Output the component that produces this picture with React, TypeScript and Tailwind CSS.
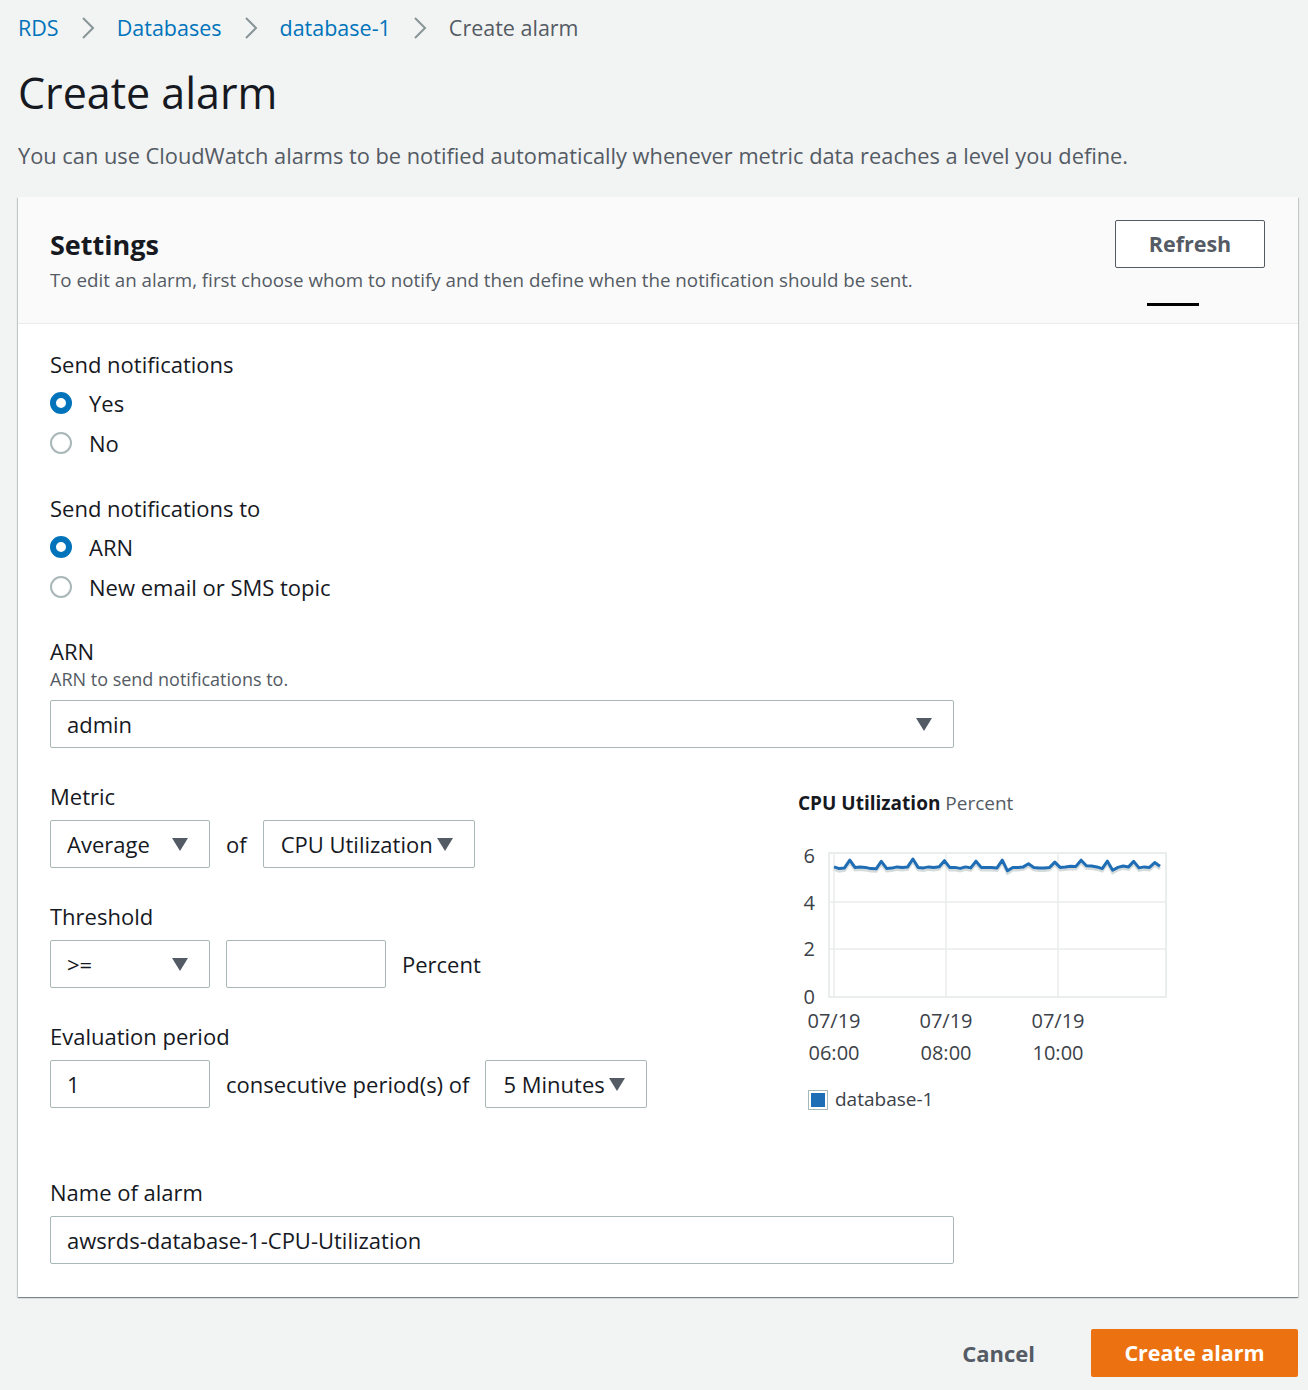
const vals = [
  5.42, 5.35, 5.38, 5.7, 5.4, 5.42, 5.4, 5.35, 5.34, 5.65, 5.36, 5.37, 5.42, 5.4, 5.42, 5.75, 5.4, 5.38, 5.42,
  5.4, 5.43, 5.68, 5.4, 5.4, 5.36, 5.42, 5.38, 5.66, 5.4, 5.4, 5.4, 5.38, 5.7, 5.26, 5.4, 5.4, 5.42, 5.55, 5.4,
  5.37, 5.38, 5.4, 5.62, 5.4, 5.42, 5.45, 5.44, 5.7, 5.47, 5.46, 5.42, 5.35, 5.66, 5.28, 5.4, 5.46, 5.42, 5.65,
  5.38, 5.42, 5.4, 5.6, 5.45,
];

function Chevron() {
  return (
    <svg width="14" height="24" viewBox="0 0 14 24" className="mx-[22px]">
      <path d="M2 2 L12 12 L2 22" fill="none" stroke="#879596" strokeWidth="2" />
    </svg>
  );
}

function Caret() {
  return (
    <svg width="16" height="13" viewBox="0 0 16 13" className="shrink-0">
      <path d="M0 0 H16 L8 13 Z" fill="#545b64" />
    </svg>
  );
}

function Radio({ checked, label }: { checked?: boolean; label: string }) {
  return (
    <div className="flex items-center h-10">
      <span
        className={
          checked
            ? "w-[22px] h-[22px] rounded-full border-[6px] border-[#0073bb] bg-white"
            : "w-[22px] h-[22px] rounded-full border-2 border-[#aab7b8] bg-white"
        }
      />
      <span className="ml-[17px] text-[#16191f]">{label}</span>
    </div>
  );
}

function Chart() {
  const x0 = 36;
  const x1 = 362;
  const step = (x1 - x0) / (vals.length - 1);
  const pts = vals.map((v, i) => `${(x0 + i * step).toFixed(1)},${(157 - v * 24).toFixed(1)}`).join(" ");
  const shadow = vals.map((v, i) => `${(x0 + i * step).toFixed(1)},${(159.5 - v * 24).toFixed(1)}`).join(" ");
  return (
    <svg width="380" height="280" viewBox="0 0 380 280" className="block">
      <rect x="31" y="13" width="337" height="144" fill="#fff" stroke="#eaeded" strokeWidth="2" />
      <line x1="31" y1="62" x2="368" y2="62" stroke="#eaeded" strokeWidth="1.5" />
      <line x1="31" y1="109" x2="368" y2="109" stroke="#eaeded" strokeWidth="1.5" />
      <line x1="36" y1="13" x2="36" y2="157" stroke="#eaeded" strokeWidth="1.5" />
      <line x1="148" y1="13" x2="148" y2="157" stroke="#eaeded" strokeWidth="1.5" />
      <line x1="260" y1="13" x2="260" y2="157" stroke="#eaeded" strokeWidth="1.5" />
      <polyline points={shadow} fill="none" stroke="#d5dbdb" strokeWidth="3" />
      <polyline points={pts} fill="none" stroke="#1f6eb5" strokeWidth="3" strokeLinejoin="round" />
      <g fill="#3b4148" fontSize="20" fontFamily="'Open Sans', sans-serif" textAnchor="end">
        <text x="17" y="23">6</text>
        <text x="17" y="70">4</text>
        <text x="17" y="116">2</text>
        <text x="17" y="164">0</text>
      </g>
      <g fill="#3b4148" fontSize="20" fontFamily="'Open Sans', sans-serif" textAnchor="middle">
        <text x="36" y="188">07/19</text>
        <text x="148" y="188">07/19</text>
        <text x="260" y="188">07/19</text>
        <text x="36" y="220">06:00</text>
        <text x="148" y="220">08:00</text>
        <text x="260" y="220">10:00</text>
      </g>
      <rect x="10.5" y="250.5" width="19" height="19" fill="#fff" stroke="#aab7b8" />
      <rect x="13" y="253" width="14" height="14" fill="#1f6eb5" />
      <text x="37" y="266" fill="#3b4148" fontSize="19" fontFamily="'Open Sans', sans-serif">
        database-1
      </text>
    </svg>
  );
}

export default function App() {
  return (
    <div className="min-h-screen bg-[#f2f3f3] pl-[18px] pr-[10px] pt-[13px] pb-[13px] font-['Open_Sans',sans-serif] text-[22px] leading-[30px] text-[#16191f]">
      <nav className="flex items-center text-[21.5px] leading-[30px]">
        <span className="text-[#0073bb]">RDS</span>
        <Chevron />
        <span className="text-[#0073bb]">Databases</span>
        <Chevron />
        <span className="text-[#0073bb]">database-1</span>
        <Chevron />
        <span className="text-[#545b64]">Create alarm</span>
      </nav>

      <h1 className="mt-[24px] text-[43px] leading-[52px] font-normal">Create alarm</h1>
      <p className="mt-[22px] text-[21.8px] leading-[30px] text-[#545b64]">
        You can use CloudWatch alarms to be notified automatically whenever metric data reaches a level you define.
      </p>

      <div className="mt-[26px] bg-white shadow-[0_1px_1px_0_rgba(0,28,36,0.3),1px_1px_1px_0_rgba(0,28,36,0.15),-1px_1px_1px_0_rgba(0,28,36,0.15)]">
        <div className="h-[127px] bg-[#fafafa] border-b border-[#eaeded] flex justify-between pl-[32px] pr-[33px] pt-[23px]">
          <div className="mt-[7px]">
            <h2 className="text-[27px] leading-[36px] font-bold">Settings</h2>
            <p className="mt-[5px] text-[18.75px] leading-[24px] text-[#545b64]">
              To edit an alarm, first choose whom to notify and then define when the notification should be sent.
            </p>
          </div>
          <div>
            <button className="w-[150px] h-12 bg-white border border-[#545b64] rounded-[2px] text-[21.5px] font-bold text-[#545b64]">
              Refresh
            </button>
            <div className="mt-[35px] ml-[32px] w-[52px] h-[3px] bg-black" />
          </div>
        </div>

        <div className="pl-[32px] pr-[32px] pt-[25px] pb-[33px]">
          <div>Send notifications</div>
          <div className="mt-[4px]">
            <Radio checked label="Yes" />
            <Radio label="No" />
          </div>

          <div className="mt-[30px]">Send notifications to</div>
          <div className="mt-[4px]">
            <Radio checked label="ARN" />
            <Radio label="New email or SMS topic" />
          </div>

          <div className="mt-[29px]">ARN</div>
          <div className="text-[18px] leading-[26px] text-[#545b64]">ARN to send notifications to.</div>
          <div className="mt-[8px] w-[904px] h-12 border border-[#aab7b8] rounded-[2px] flex items-center justify-between pl-[16px] pr-[21px]">
            <span>admin</span>
            <Caret />
          </div>

          <div className="flex items-start">
            <div className="w-[748px]">
              <div className="mt-[33px]">Metric</div>
              <div className="mt-[9px] flex items-center">
                <div className="w-[160px] h-12 border border-[#aab7b8] rounded-[2px] flex items-center justify-between pl-[16px] pr-[21px]">
                  <span>Average</span>
                  <Caret />
                </div>
                <span className="mx-[16px]">of</span>
                <div className="h-12 border border-[#aab7b8] rounded-[2px] flex items-center gap-[4px] pl-[17px] pr-[21px]">
                  <span>CPU Utilization</span>
                  <Caret />
                </div>
              </div>

              <div className="mt-[33px]">Threshold</div>
              <div className="mt-[9px] flex items-center">
                <div className="w-[160px] h-12 border border-[#aab7b8] rounded-[2px] flex items-center justify-between pl-[16px] pr-[21px]">
                  <span>&gt;=</span>
                  <Caret />
                </div>
                <div className="ml-[16px] w-[160px] h-12 border border-[#aab7b8] rounded-[2px]" />
                <span className="ml-[16px]">Percent</span>
              </div>

              <div className="mt-[33px]">Evaluation period</div>
              <div className="mt-[9px] flex items-center">
                <div className="w-[160px] h-12 border border-[#aab7b8] rounded-[2px] flex items-center pl-[16px]">
                  <span>1</span>
                </div>
                <span className="mx-[16px]">consecutive period(s) of</span>
                <div className="h-12 border border-[#aab7b8] rounded-[2px] flex items-center gap-[4px] pl-[17px] pr-[21px]">
                  <span>5 Minutes</span>
                  <Caret />
                </div>
              </div>
            </div>

            <div className="h-[360px] pt-[42px]">
              <div className="text-[19px] leading-[26px] text-[#545b64]">
                <span className="font-bold text-[#16191f]">CPU Utilization</span> Percent
              </div>
              <div className="mt-[24px]">
                <Chart />
              </div>
            </div>
          </div>

          <div className="mt-[69px]">Name of alarm</div>
          <div className="mt-[9px] w-[904px] h-12 border border-[#aab7b8] rounded-[2px] flex items-center pl-[16px]">
            <span>awsrds-database-1-CPU-Utilization</span>
          </div>
        </div>
      </div>

      <div className="mt-[32px] flex justify-end items-center">
        <button className="mr-[56px] text-[22px] font-bold text-[#545b64]">Cancel</button>
        <button className="w-[207px] h-12 bg-[#ec7211] rounded-[2px] text-[21.5px] font-bold text-white">
          Create alarm
        </button>
      </div>
    </div>
  );
}
